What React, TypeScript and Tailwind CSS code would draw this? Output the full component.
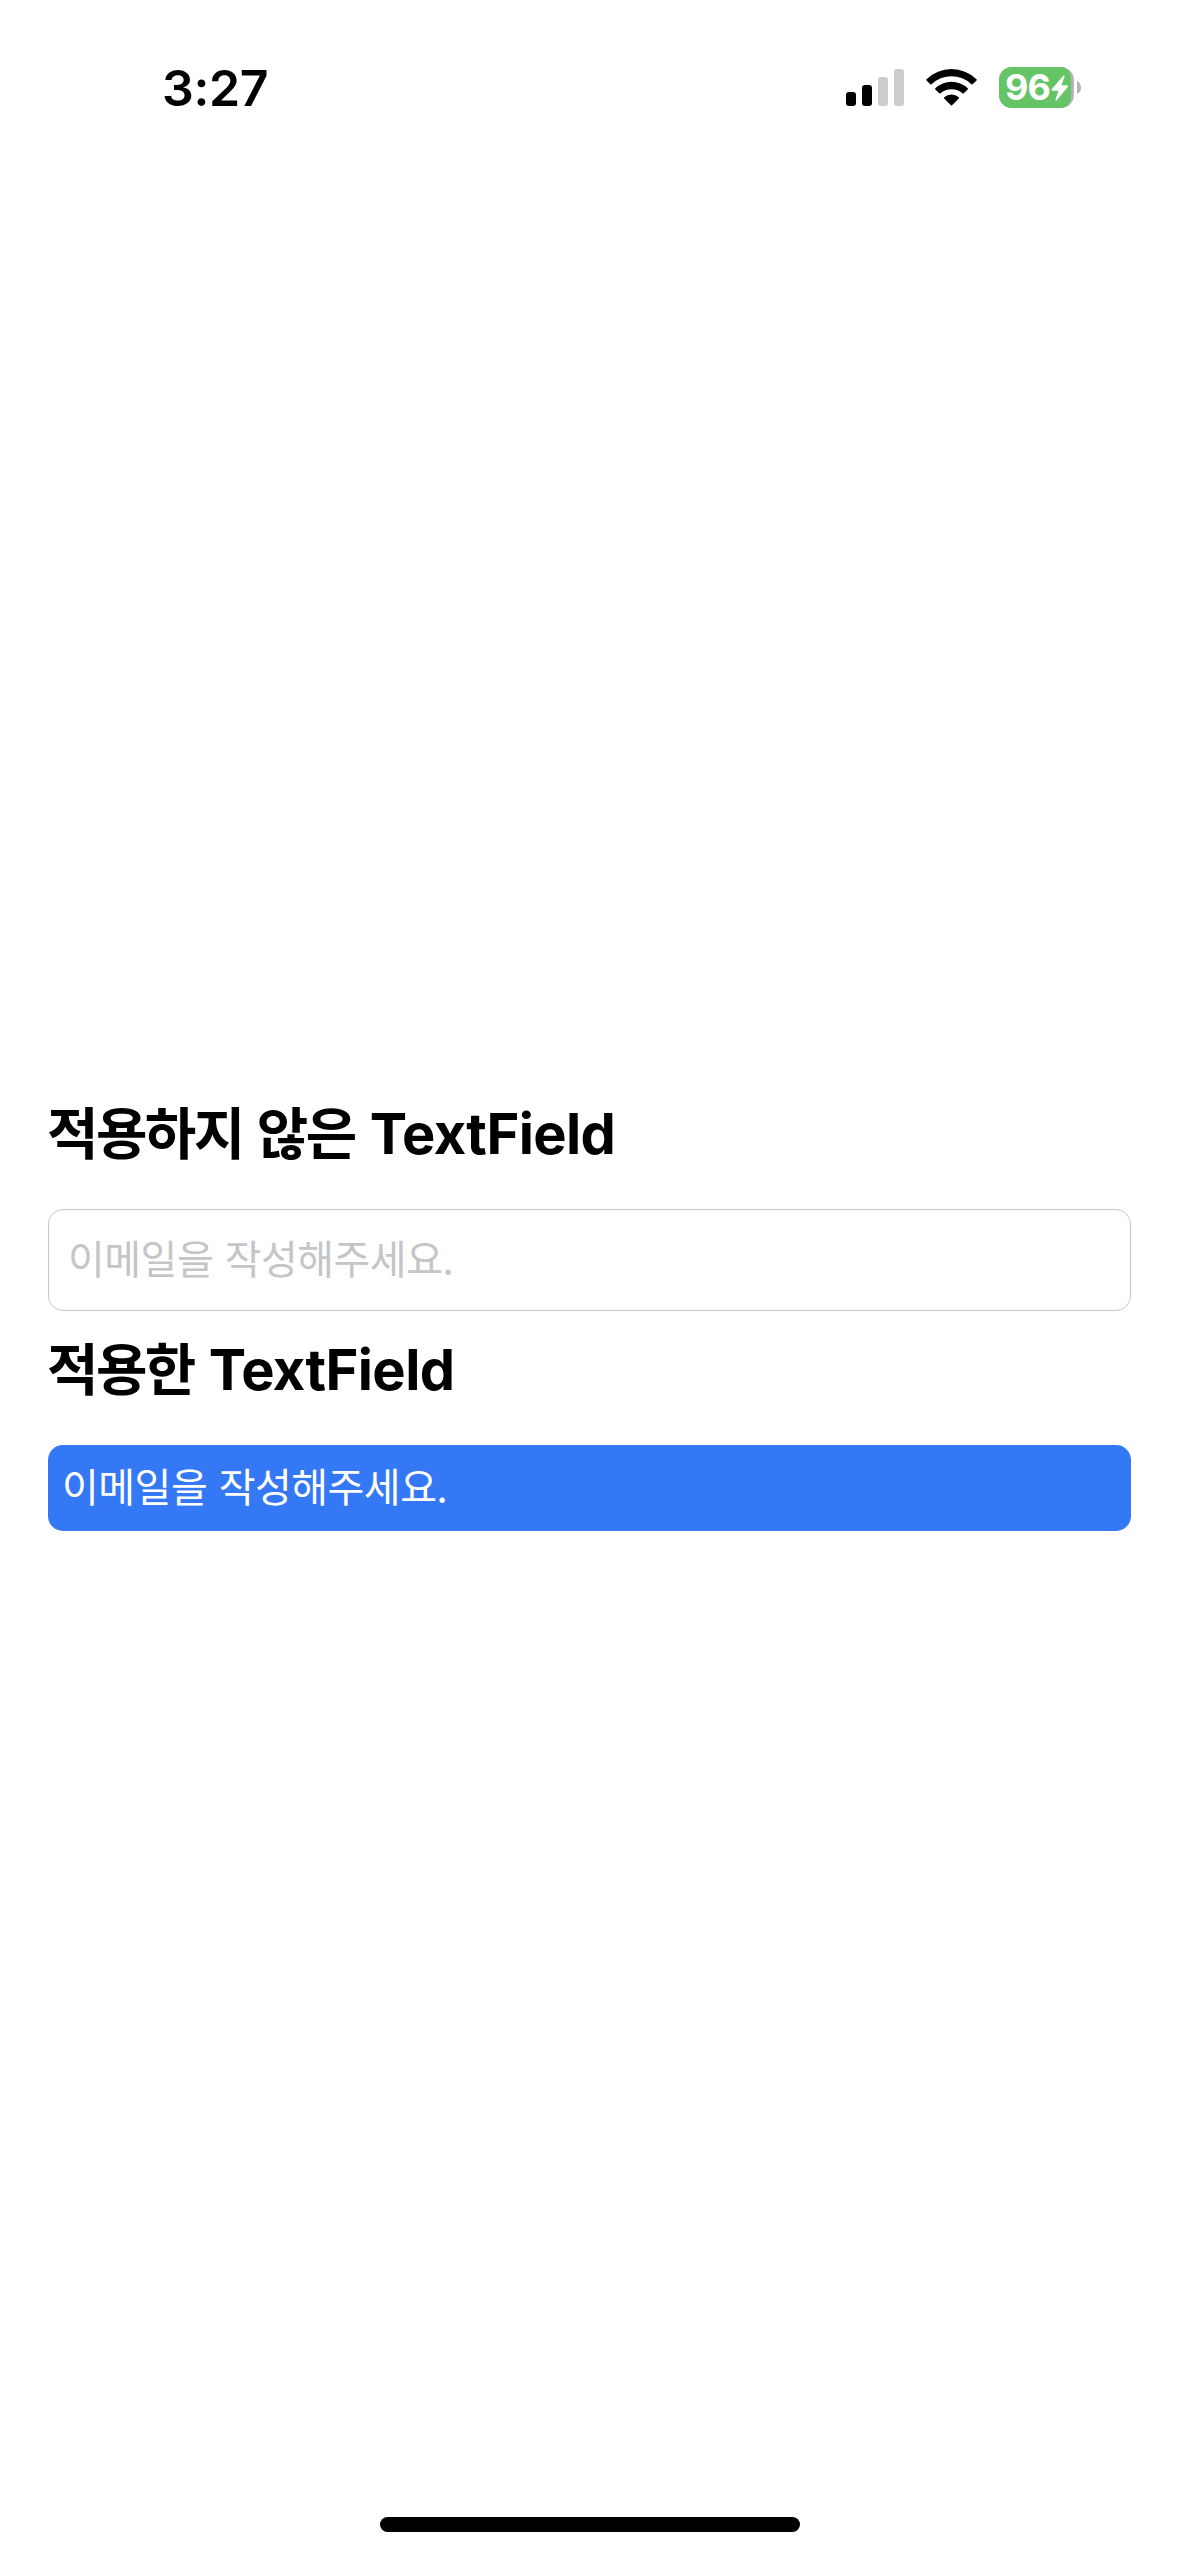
import React from "react";

function StatusBar() {
  return (
    <header className="flex h-[177px] items-start justify-between pt-[56px] pl-[162px] pr-[98px]">
      <div className="text-[50px] leading-[64px] font-semibold tracking-[-0.4px]">3:27</div>
      <div className="flex pt-[11px]">
        <svg className="mt-[2px] h-[37px] w-[58px]" viewBox="0 0 58 37">
          <rect x="0" y="23" width="10" height="14" rx="3" fill="#000" />
          <rect x="16" y="16" width="10" height="21" rx="3" fill="#000" />
          <rect x="32" y="8" width="10" height="29" rx="3" fill="#ccc" />
          <rect x="48" y="0" width="10" height="37" rx="3" fill="#ccc" />
        </svg>
        <svg className="mt-[2px] ml-[22px] h-[37px] w-[51px]" viewBox="0 0 51 37">
          <path d="M0.5 10.2 Q0 10.8 0.5 11.4 L4.4 15.2 Q5 15.8 5.6 15.2 A28.8 28.8 0 0 1 45.4 15.2 Q46 15.8 46.6 15.2 L50.5 11.4 Q51 10.8 50.5 10.2 A36 36 0 0 0 0.5 10.2 Z" />
          <path d="M9.3 19.2 Q8.8 19.8 9.3 20.4 L13.3 24.3 Q13.9 24.9 14.5 24.3 A16.6 16.6 0 0 1 36.5 24.3 Q37.1 24.9 37.7 24.3 L41.7 20.4 Q42.2 19.8 41.7 19.2 A23.6 23.6 0 0 0 9.3 19.2 Z" />
          <path d="M18.2 28.2 Q17.6 28.8 18.2 29.4 L24.9 36.2 Q25.5 36.8 26.1 36.2 L32.8 29.4 Q33.4 28.8 32.8 28.2 A11 11 0 0 0 18.2 28.2 Z" />
        </svg>
        <div className="ml-[22px] flex items-center gap-[3px]">
          <div className="flex h-[41px] w-[75px] rounded-[13px] bg-[#b5b5b8]">
            <div className="flex h-full w-[72px] items-center rounded-l-[13px] rounded-r-[10px] bg-[#65c466] pl-[6px] text-white">
              <span className="w-[46px] text-[36px] leading-[45px] font-bold tracking-[-0.8px]">96</span>
              <svg className="h-[26px] w-[18px]" viewBox="0 0 18 26" fill="currentColor">
                <path d="M12.3 0.6 L0.8 14.3 Q0.2 15.5 1.4 15.7 H7.5 L4.4 24.6 Q4.6 26 5.8 25.2 L17.1 11.6 Q17.6 10.5 16.4 10.2 H10.5 L13.7 1.3 Q13.5 0 12.3 0.6 Z" />
              </svg>
            </div>
          </div>
          <svg className="h-[13px] w-[4px]" viewBox="0 0 4 13">
            <path d="M0 0 Q4 2 4 6.5 Q4 11 0 13 Z" fill="#b3b3b3" />
          </svg>
        </div>
      </div>
    </header>
  );
}

function Heading({ korean }: { korean: string }) {
  return (
    <h1 className="-ml-px flex h-[72px] items-baseline text-[56px] leading-[72px] font-bold whitespace-pre">
      <span className="font-['Noto_Sans_CJK_KR',sans-serif] tracking-[-2.6px] [word-spacing:4px]">{korean}</span>
      <span className="ml-[15px] tracking-[-0.6px]">TextField</span>
    </h1>
  );
}

const inputText =
  "block w-full rounded-[15px] pb-[6px] font-['Noto_Sans_CJK_KR',sans-serif] text-[40px] font-normal tracking-[-0.5px] [word-spacing:3px] outline-none";

export default function App() {
  return (
    <div className="flex h-[2556px] w-[1179px] flex-col bg-white font-['Inter','Noto_Sans_CJK_KR',sans-serif] text-black">
      <StatusBar />
      <main className="flex flex-1 flex-col px-[48px] pt-[917px]">
        <Heading korean="적용하지 않은" />
        <input
          placeholder="이메일을 작성해주세요."
          className={`${inputText} mt-[43px] h-[102px] border border-[#c8c8ca] px-[19px] placeholder:text-[#c5c5c7] placeholder:opacity-100`}
        />
        <div className="mt-[19px]">
          <Heading korean="적용한" />
        </div>
        <input
          placeholder="이메일을 작성해주세요."
          className={`${inputText} mt-[43px] h-[86px] bg-[#3478f6] px-[14px] placeholder:text-white placeholder:opacity-100`}
        />
      </main>
      <div className="mb-[24px] h-[15px] w-[420px] self-center rounded-full bg-black" />
    </div>
  );
}
